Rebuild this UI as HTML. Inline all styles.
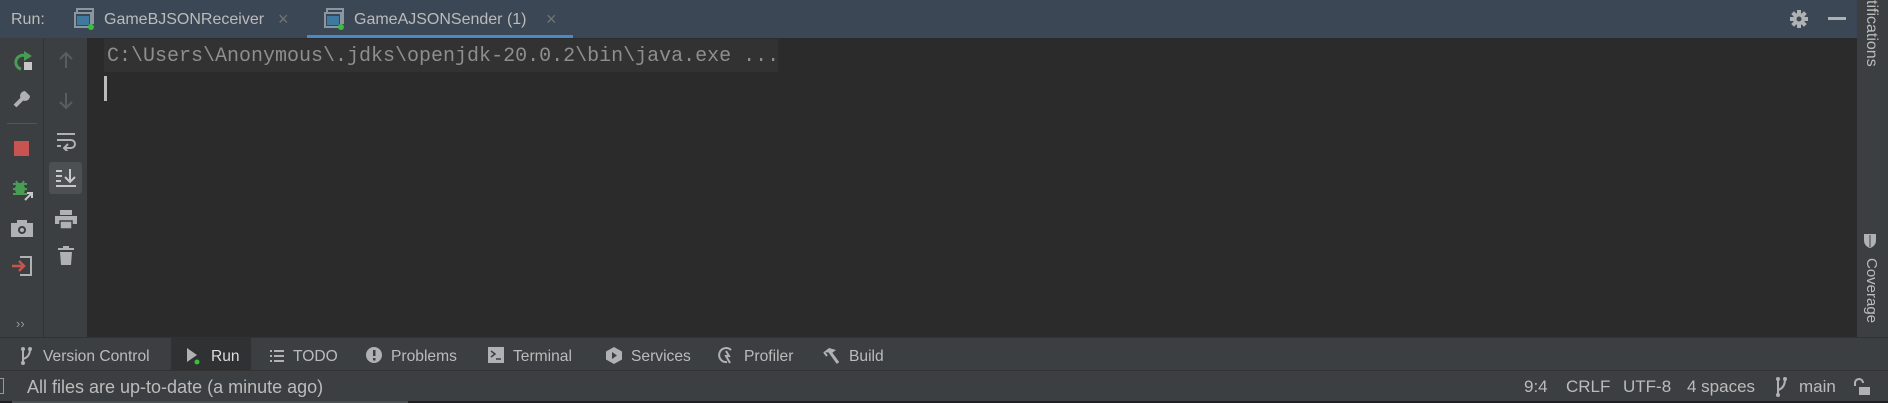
<!DOCTYPE html>
<html><head><meta charset="utf-8"><style>
*{margin:0;padding:0;box-sizing:border-box}
body{width:1888px;height:403px;overflow:hidden;background:#2b2b2b;font-family:"Liberation Sans",sans-serif;color:#bbbbbb;position:relative}
.a{position:absolute}
.t{position:absolute;font-size:16px;line-height:20px;white-space:nowrap}
</style></head><body>
<!-- header -->
<div class="a" style="left:0;top:0;width:1857px;height:38px;background:#3c4755"></div>
<div class="t" style="left:11px;top:10px;color:#bbb">Run:</div>
<svg class="a" style="left:74px;top:8px" width="22" height="22"><rect x="3" y="1" width="16" height="14" fill="none" stroke="#8b96a0" stroke-width="2"/><rect x="1" y="5" width="16" height="14" fill="#3c4755" stroke="#8b96a0" stroke-width="2"/><rect x="3" y="8" width="12" height="9" fill="#3e7aa0"/><circle cx="17" cy="19" r="3" fill="#3cbe3c"/></svg>
<div class="t" style="left:104px;top:10px">GameBJSONReceiver</div>
<div class="t" style="left:278px;top:9px;color:#6f7478;font-size:18px">×</div>
<svg class="a" style="left:324px;top:8px" width="22" height="22"><rect x="3" y="1" width="16" height="14" fill="none" stroke="#8b96a0" stroke-width="2"/><rect x="1" y="5" width="16" height="14" fill="#3c4755" stroke="#8b96a0" stroke-width="2"/><rect x="3" y="8" width="12" height="9" fill="#3e7aa0"/><circle cx="17" cy="19" r="3" fill="#3cbe3c"/></svg>
<div class="t" style="left:354px;top:10px">GameAJSONSender (1)</div>
<div class="t" style="left:546px;top:9px;color:#6f7478;font-size:18px">×</div>
<div class="a" style="left:307px;top:35px;width:266px;height:3px;background:#4a88c7"></div>
<svg class="a" style="left:1789px;top:9px" width="20" height="20" viewBox="0 0 20 20"><g fill="#afb1b3"><circle cx="10" cy="10" r="6"/><rect x="8" y="1" width="4" height="18"/><rect x="1" y="8" width="18" height="4"/><rect x="8" y="1" width="4" height="18" transform="rotate(45 10 10)"/><rect x="8" y="1" width="4" height="18" transform="rotate(-45 10 10)"/></g><circle cx="10" cy="10" r="2.5" fill="#3c4755"/></svg>
<div class="a" style="left:1828px;top:17px;width:18px;height:3px;background:#afb1b3"></div>

<!-- left toolbars -->
<div class="a" style="left:0;top:38px;width:43px;height:300px;background:#3c3f41"></div>
<div class="a" style="left:43px;top:38px;width:1px;height:300px;background:#323232"></div>
<div class="a" style="left:44px;top:38px;width:43px;height:300px;background:#3c3f41"></div>
<svg class="a" style="left:12px;top:50px" width="22" height="22"><path d="M14 6 A7 7 0 1 0 9 19" fill="none" stroke="#499c54" stroke-width="3"/><path d="M12 1 L20 6 L12 11Z" fill="#499c54"/><rect x="12" y="12" width="8" height="8" fill="#c8c8c8"/></svg>
<svg class="a" style="left:12px;top:89px" width="20" height="20"><path d="M3 17 L11 9" stroke="#afb1b3" stroke-width="4"/><circle cx="13" cy="7" r="5" fill="#afb1b3"/><path d="M13 2 L18 2 L18 7Z" fill="#3c3f41"/></svg>
<div class="a" style="left:7px;top:123px;width:30px;height:1px;background:#555"></div>
<div class="a" style="left:14px;top:141px;width:15px;height:15px;background:#c75450"></div>
<svg class="a" style="left:11px;top:178px" width="24" height="24"><ellipse cx="9" cy="11" rx="5" ry="6" fill="#499c54"/><path d="M2 6h14M2 11h14M2 16h14M5 3l2 3M13 3l-2 3" stroke="#499c54" stroke-width="2"/><path d="M14 22 L21 15 M16 15h5v5" stroke="#c8c8c8" stroke-width="2" fill="none"/></svg>
<svg class="a" style="left:11px;top:219px" width="22" height="18"><rect x="0" y="4" width="22" height="14" fill="#afb1b3"/><rect x="6" y="1" width="10" height="4" fill="#afb1b3"/><circle cx="11" cy="11" r="4" fill="#3c3f41"/><circle cx="11" cy="11" r="2" fill="#afb1b3"/></svg>
<svg class="a" style="left:11px;top:255px" width="22" height="22"><path d="M9 2h11v18H9" fill="none" stroke="#afb1b3" stroke-width="2"/><path d="M1 11h11M8 6l5 5-5 5" stroke="#c75450" stroke-width="2.5" fill="none"/></svg>
<div class="t" style="left:16px;top:314px;font-size:13px;color:#999">››</div>
<svg class="a" style="left:57px;top:50px" width="18" height="20"><path d="M9 18V3M3 9l6-6 6 6" stroke="#5a5d5f" stroke-width="2" fill="none"/></svg>
<svg class="a" style="left:57px;top:91px" width="18" height="20"><path d="M9 2v15M3 11l6 6 6-6" stroke="#5a5d5f" stroke-width="2" fill="none"/></svg>
<svg class="a" style="left:56px;top:131px" width="22" height="20"><path d="M1 3h18M1 9h14a4 4 0 0 1 0 8H9M12 13l-4 4 4 4M1 15h4" stroke="#afb1b3" stroke-width="2" fill="none"/></svg>
<div class="a" style="left:49px;top:162px;width:33px;height:32px;background:#4c5052;border-radius:3px"></div>
<svg class="a" style="left:55px;top:168px" width="22" height="20"><path d="M1 3h6M1 8h6M1 13h5M1 18h20M15 1v13M10 9l5 5 5-5" stroke="#c8c8c8" stroke-width="2" fill="none"/></svg>
<svg class="a" style="left:55px;top:209px" width="22" height="20"><rect x="5" y="1" width="12" height="5" fill="#afb1b3"/><rect x="0" y="7" width="22" height="8" fill="#afb1b3"/><rect x="5" y="12" width="12" height="8" fill="#afb1b3" stroke="#3c3f41" stroke-width="1.5"/></svg>
<svg class="a" style="left:58px;top:246px" width="16" height="20"><rect x="0" y="2" width="16" height="2" fill="#afb1b3"/><rect x="5" y="0" width="6" height="3" fill="#afb1b3"/><path d="M2 6h12l-1 13H3z" fill="#afb1b3"/></svg>

<!-- console -->
<div class="a" style="left:104px;top:39px;width:674px;height:33px;background:#323232"></div>
<div class="t" style="left:107px;top:46px;font-family:'Liberation Mono',monospace;font-size:20px;line-height:22px;color:#8e8e8e">C:\Users\Anonymous\.jdks\openjdk-20.0.2\bin\java.exe ...</div>
<div class="a" style="left:104px;top:76px;width:3px;height:25px;background:#bbb"></div>

<!-- right strip -->
<div class="a" style="left:1857px;top:0;width:31px;height:338px;background:#3c3f41"></div>
<div class="t" style="left:1861px;top:0;width:66px;height:20px;transform-origin:0 0;transform:translate(20px,0) rotate(90deg);font-size:16px;text-align:right">tifications</div>
<svg class="a" style="left:1863px;top:232px" width="14" height="17"><path d="M1 2 L13 2 L13 8 Q13 14 7 16 Q1 14 1 8Z" fill="#afb1b3"/><path d="M7 3v12" stroke="#3c3f41" stroke-width="1"/></svg>
<div class="t" style="left:1861px;top:258px;width:66px;height:20px;transform-origin:0 0;transform:translate(20px,0) rotate(90deg);font-size:15px">Coverage</div>

<!-- bottom tool bar -->
<div class="a" style="left:0;top:337px;width:1888px;height:1px;background:#323232"></div>
<div class="a" style="left:0;top:338px;width:1888px;height:32px;background:#3c3f41"></div>
<div class="a" style="left:171px;top:338px;width:80px;height:32px;background:#2f3133"></div>
<svg class="a" style="left:20px;top:347px" width="12" height="18"><path d="M3 1v16M3 12 Q10 10 10 2" stroke="#afb1b3" stroke-width="2" fill="none"/><circle cx="3" cy="2" r="2" fill="#afb1b3"/><circle cx="10" cy="2" r="2" fill="#afb1b3"/><circle cx="3" cy="16" r="2" fill="#afb1b3"/></svg>
<div class="t" style="left:43px;top:347px;font-size:15.6px">Version Control</div>
<svg class="a" style="left:186px;top:347px" width="14" height="18"><path d="M1 1 L11 8 L1 15Z" fill="#afb1b3"/><circle cx="11" cy="15" r="2.5" fill="#3cbe3c"/></svg>
<div class="t" style="left:211px;top:347px;font-size:15.6px;color:#ddd">Run</div>
<svg class="a" style="left:269px;top:349px" width="16" height="14"><path d="M1 2h2M1 7h2M1 12h2M5 2h10M5 7h10M5 12h10" stroke="#afb1b3" stroke-width="2"/></svg>
<div class="t" style="left:293px;top:347px;font-size:15.6px">TODO</div>
<svg class="a" style="left:366px;top:347px" width="16" height="16"><circle cx="8" cy="8" r="8" fill="#afb1b3"/><rect x="7" y="3" width="2.5" height="6" fill="#3c3f41"/><rect x="7" y="11" width="2.5" height="2.5" fill="#3c3f41"/></svg>
<div class="t" style="left:391px;top:347px;font-size:15.6px">Problems</div>
<svg class="a" style="left:488px;top:347px" width="16" height="16"><rect width="16" height="16" fill="#afb1b3"/><path d="M3 4l4 3-4 3M8 12h5" stroke="#3c3f41" stroke-width="1.5" fill="none"/></svg>
<div class="t" style="left:513px;top:347px;font-size:15.6px">Terminal</div>
<svg class="a" style="left:606px;top:347px" width="16" height="17"><path d="M8 0 L16 4.5 V12.5 L8 17 L0 12.5 V4.5Z" fill="#afb1b3"/><path d="M6 5 L11 8.5 L6 12Z" fill="#3c3f41"/></svg>
<div class="t" style="left:631px;top:347px;font-size:15.6px">Services</div>
<svg class="a" style="left:717px;top:346px" width="18" height="18"><path d="M14 4 A7 7 0 1 0 10 16" fill="none" stroke="#afb1b3" stroke-width="2"/><path d="M9 5 L12 10 L9 10 L13 17" stroke="#afb1b3" stroke-width="2" fill="none"/></svg>
<div class="t" style="left:744px;top:347px;font-size:15.6px">Profiler</div>
<svg class="a" style="left:822px;top:347px" width="18" height="17"><path d="M2 5 L7 1 L14 3 L10 6Z" fill="#afb1b3"/><path d="M8 5 L16 16" stroke="#afb1b3" stroke-width="3"/><path d="M2 5 L5 9" stroke="#afb1b3" stroke-width="2"/></svg>
<div class="t" style="left:849px;top:347px;font-size:15.6px">Build</div>

<!-- status bar -->
<div class="a" style="left:0;top:370px;width:1888px;height:1px;background:#323232"></div>
<div class="a" style="left:0;top:371px;width:1888px;height:30px;background:#3c3f41"></div>
<div class="a" style="left:0;top:378px;width:4px;height:16px;border:1px solid #999;border-left:none"></div>
<div class="t" style="left:27px;top:376px;font-size:18px;line-height:22px">All files are up-to-date (a minute ago)</div>
<div class="t" style="left:1524px;top:377px;font-size:17px">9:4</div>
<div class="t" style="left:1566px;top:377px;font-size:17px">CRLF</div>
<div class="t" style="left:1623px;top:377px;font-size:17px">UTF-8</div>
<div class="t" style="left:1687px;top:377px;font-size:17px">4 spaces</div>
<svg class="a" style="left:1775px;top:377px" width="12" height="20"><path d="M3 1v17M3 13 Q10 11 10 2" stroke="#afb1b3" stroke-width="2" fill="none"/><circle cx="3" cy="2" r="2" fill="#afb1b3"/><circle cx="10" cy="2" r="2" fill="#afb1b3"/><circle cx="3" cy="18" r="2" fill="#afb1b3"/></svg>
<div class="t" style="left:1799px;top:377px;font-size:17px">main</div>
<svg class="a" style="left:1853px;top:378px" width="18" height="18"><path d="M2 8 V5 A4 4 0 0 1 10 5" stroke="#afb1b3" stroke-width="2" fill="none"/><rect x="6" y="9" width="11" height="8" fill="#afb1b3"/></svg>
<div class="a" style="left:0;top:401px;width:1888px;height:2px;background:#1e1f20"></div>
<div class="a" style="left:12px;top:401px;width:396px;height:2px;background:#4b4e50"></div>
</body></html>
